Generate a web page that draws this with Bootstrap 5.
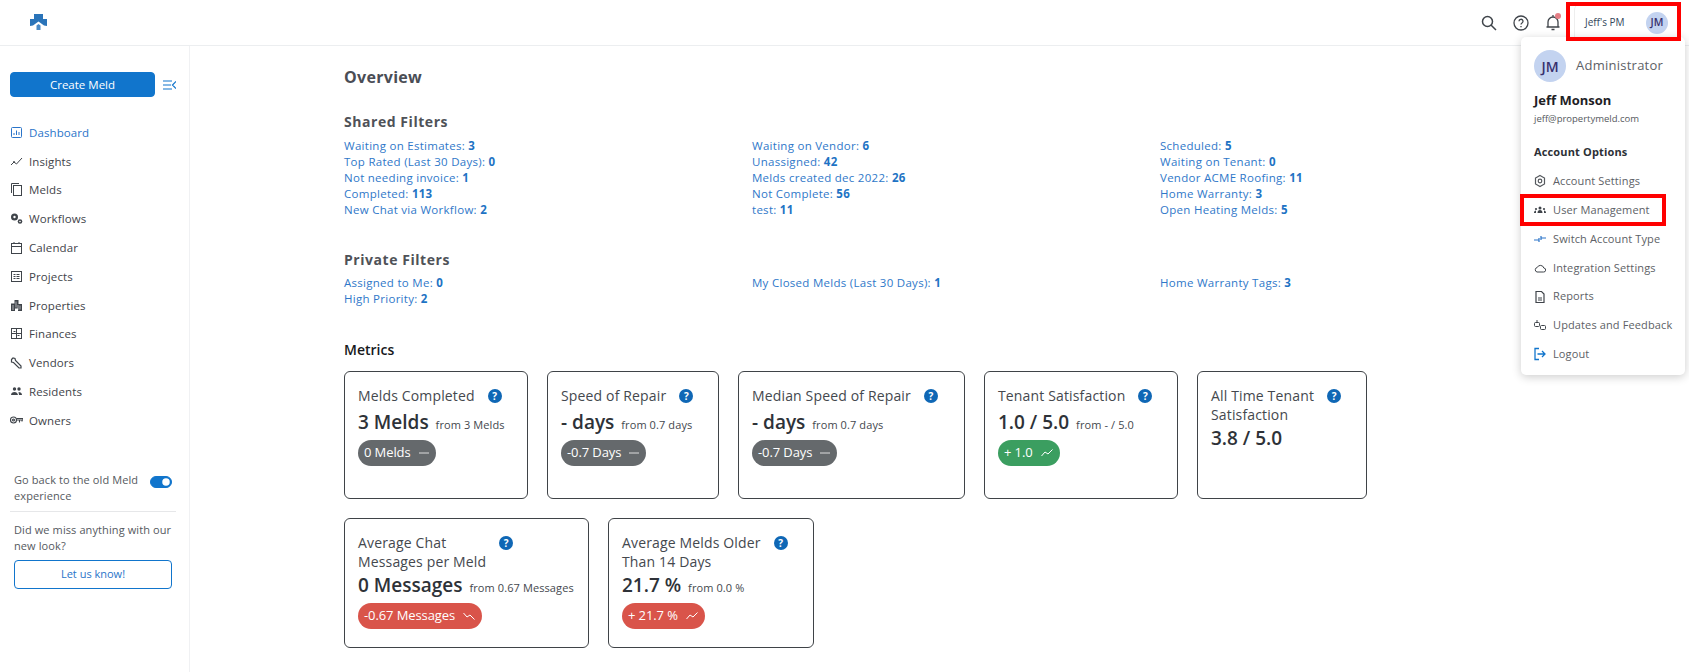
<!DOCTYPE html>
<html lang="en">
<head>
<meta charset="utf-8">
<title>Overview</title>
<link href="https://cdn.jsdelivr.net/npm/bootstrap@5.3.0/dist/css/bootstrap.min.css" rel="stylesheet">
<style>
html,body{height:672px;overflow:hidden;background:#fff}
body{font-family:"Open Sans","Liberation Sans",sans-serif;color:#3f444a;font-size:12px}
svg{display:block;flex:none}
.topbar{height:46px;border-bottom:1px solid #eceef0;padding-left:30px}
.top-icons{gap:16px;margin-right:13px}
.acct-chip{width:106px;height:38px;margin-right:9px;padding:0 12px 0 10px;border-left:1px solid #eee;border-radius:6px;font-size:10px;color:#33475b}
.avatar-round{width:22px;height:22px;border-radius:50%;background:#c3d3f0;color:#37306e;font-weight:600;font-size:10.5px}
.bell-wrap{position:relative}
.bell-dot{position:absolute;top:-1px;right:0;width:6px;height:6px;border-radius:50%;background:#e57f86}
.shell{height:626px}
.side-rail{width:190px;border-right:1px solid #f0f1f3;padding:26px 13px 0 10px;flex:none}
.create-btn{width:145px;height:25px;padding:0;font-size:11.500px;font-weight:500;background:#1175cc;border-color:#1175cc;border-radius:4px}
.rail-nav{margin-top:21px}
.rail-nav .nav-link{height:28.8px;padding:0;gap:6px;color:#3f444a;font-size:11.500px;letter-spacing:.1px;display:flex;align-items:center}
.rail-nav svg{width:13px}
.rail-nav .nav-link.active{color:#2a74c9}
.rail-foot{margin-top:37px;padding-left:4px;line-height:16px;font-size:11px;color:#55595e;letter-spacing:.1px}
.rail-foot .form-check-input{width:22px;height:12px;margin:0 4px 0 0;background-color:#1175cc;border-color:#1175cc;float:none}
.rail-rule{margin:7px 0 10px -4px;width:166px;border:0;border-top:1px solid #e6e7e9;opacity:1}
.letus-btn{width:158px;height:29px;padding:0;margin-top:6px;font-size:11px;color:#2a74c9;border:1px solid #1175cc;border-radius:4px;display:block}
.main-area{padding:21px 0 0 154px;flex:1;min-width:0}
.page-head{font-size:16px;font-weight:700;color:#4a4d55;line-height:20px;margin:0 0 25px;letter-spacing:.3px}
.sect-head{font-size:14px;font-weight:700;color:#4f5258;line-height:20px;margin:0 0 5px;letter-spacing:.55px}
.sect-head.first{margin-bottom:6px}
.filter-grid{width:1224px;margin:0 0 32px;--bs-gutter-x:0}
.filter-grid.last{margin-bottom:37px}
.filter-link{display:block;line-height:16px;height:16px;font-size:11.500px;color:#2f78c9;text-decoration:none;letter-spacing:.28px}
.filter-link b{font-weight:700;color:#1e73c4}
.metric-head{font-size:14px;font-weight:600;color:#17191c;line-height:20px;margin:-4px 0 11px}
.metric-rows{gap:19px;width:1100px}
.metric-box{border:1px solid #3f4347;border-radius:6px;padding:14px 13px 0;height:128px}
.metric-box.tall{height:130px}
.w-a{width:184px}.w-b{width:172px}.w-c{width:227px}.w-d{width:194px}.w-e{width:170px}.w-f{width:245px}.w-g{width:206px}
.metric-title{font-size:14px;line-height:19px;gap:13px;color:#44484e;margin-bottom:0;letter-spacing:.15px}
.q-dot{width:14px;height:14px;border-radius:50%;background:#0f67b5;color:#fff;font-size:10px;font-weight:700;line-height:14px;text-align:center;margin-top:3px;flex:none;letter-spacing:0}
.metric-val{font-size:19px;font-weight:600;color:#2e3238;line-height:26px;margin-top:4px;white-space:nowrap}
.two-line .metric-val{margin-top:1px}
.metric-val small{font-size:11px;font-weight:400;color:#44484e;margin-left:2px;letter-spacing:.1px}
.trend-pill{height:26px;border-radius:13px;padding:0 7px 0 6px;font-size:13px;font-weight:500;color:#fff;gap:8px;margin-top:2px;width:fit-content;letter-spacing:-.1px}
.pill-gray{background:#65696c}.pill-green{background:#3b9e60}.pill-red{background:#d9544a}
.acct-menu{position:absolute;left:1521px;top:37px;width:164px;height:338px;background:#fff;border-radius:5px;box-shadow:0 2px 10px rgba(0,0,0,.2);padding:13px 0 0 13px;z-index:5}
.menu-avatar{width:32px;height:32px;border-radius:50%;background:#c3d3f0;color:#37306e;font-weight:600;font-size:14px}
.menu-role{font-size:13px;font-weight:500;color:#5d6166;letter-spacing:.25px;margin-left:10px}
.menu-name{font-size:13px;font-weight:700;color:#1e2125;line-height:18px;margin-top:9px}
.menu-mail{font-size:9.500px;color:#55595e;line-height:14px;margin-top:3px}
.menu-opts{font-size:11px;font-weight:700;color:#2c3036;line-height:16px;margin-top:18px;letter-spacing:.15px}
.menu-list{margin-top:7px}
.menu-list .list-group-item{border:0;padding:0;height:28.8px;gap:7px;font-size:11px;color:#5d6166;letter-spacing:.12px;background:transparent;display:flex;align-items:center;white-space:nowrap}
.menu-ico{width:12px;height:14px}
.red-frame{position:absolute;border:4px solid #f00;z-index:6;pointer-events:none}
.frame-top{left:1566px;top:2px;width:115px;height:39px}
.frame-user{left:1520px;top:194px;width:146px;height:32px}
</style>
</head>
<body>
<header class="topbar d-flex align-items-center justify-content-between">
  <svg width="17" height="17" viewBox="0 0 17 17"><path d="M4 0h9v5h4v7l-3-.5-5.500-4-5.500 4L0 12V5h4z" fill="#2a74b9"/><path d="M6.500 11.500l2-1.500 2 1.500V16h-4z" fill="#4a8ac6"/></svg>
  <div class="d-flex align-items-center">
    <div class="top-icons d-flex align-items-center">
      <svg width="16" height="16" viewBox="0 0 16 16" fill="none" stroke="#3f444a" stroke-width="1.500"><circle cx="6.500" cy="6.500" r="5"/><path d="M10 10l5 5"/></svg>
      <svg width="16" height="16" viewBox="0 0 16 16" fill="none" stroke="#3f444a" stroke-width="1.300"><circle cx="8" cy="8" r="7"/><path d="M6 6.300a2 2 0 1 1 3 1.700c-.7.400-1 .8-1 1.600M8 11v1.300"/></svg>
      <span class="bell-wrap"><svg width="16" height="17" viewBox="0 0 16 17" fill="none" stroke="#3f444a" stroke-width="1.300"><path d="M3 13V8a5 5 0 0 1 10 0v5M1.500 13h13M6.500 15.500h3M8 1v2"/></svg><i class="bell-dot"></i></span>
    </div>
    <div class="acct-chip d-flex align-items-center justify-content-between"><span>Jeff's PM</span><span class="avatar-round d-flex align-items-center justify-content-center">JM</span></div>
  </div>
</header>
<div class="shell d-flex">
  <aside class="side-rail">
    <div class="d-flex align-items-center">
      <button class="btn btn-primary create-btn" type="button">Create Meld</button>
      <svg class="ms-2" width="13" height="10" viewBox="0 0 13 10" fill="none" stroke="#1175cc" stroke-width="1.200"><path d="M0 1h9M0 5h8M0 9h9M13 1.500L9.500 5l3.500 3.500"/></svg>
    </div>
    <nav class="nav flex-column rail-nav">
      <a class="nav-link active" href="#"><svg width="11" height="11" viewBox="0 0 11 11" fill="none" stroke="#2a74c9"><rect x=".5" y=".5" width="10" height="10" rx="1"/><path d="M3 8V6M5.500 8V3.500M8 8V5"/></svg>Dashboard</a>
      <a class="nav-link" href="#"><svg width="12" height="11" viewBox="0 0 12 11" fill="none" stroke="#3f444a"><path d="M.5 9l3-3 2.500 2 5.500-6"/><circle cx="3.500" cy="6" r=".6"/></svg>Insights</a>
      <a class="nav-link" href="#"><svg width="11" height="13" viewBox="0 0 11 13" fill="none" stroke="#3f444a"><path d="M.5 10V.5H8"/><rect x="2.500" y="2.500" width="8" height="10"/></svg>Melds</a>
      <a class="nav-link" href="#"><svg width="12" height="11" viewBox="0 0 12 11" fill="#3f444a"><circle cx="4" cy="4" r="3.500"/><circle cx="9.500" cy="8.500" r="2.300"/><circle cx="4" cy="4" r="1.200" fill="#fff"/><circle cx="9.500" cy="8.500" r=".8" fill="#fff"/></svg>Workflows</a>
      <a class="nav-link" href="#"><svg width="11" height="12" viewBox="0 0 11 12" fill="none" stroke="#3f444a"><rect x=".5" y="1.500" width="10" height="10"/><path d="M.5 4.500h10M3 0v2M8 0v2"/></svg>Calendar</a>
      <a class="nav-link" href="#"><svg width="11" height="11" viewBox="0 0 11 11" fill="none" stroke="#3f444a"><rect x=".5" y=".5" width="10" height="10"/><path d="M2.500 3.500h2M2.500 5.500h2M2.500 7.500h2M5.500 3.500h3M5.500 5.500h3M5.500 7.500h3"/></svg>Projects</a>
      <a class="nav-link" href="#"><svg width="11" height="11" viewBox="0 0 11 11" fill="#3f444a"><path d="M3.500 0h4v4H11v7H7V8.500H4V11H0V3.500h3.500z"/><path d="M5 1.500v6M7 5v5M2 5v5M9 5.500v4" stroke="#fff" stroke-width=".6"/></svg>Properties</a>
      <a class="nav-link" href="#"><svg width="11" height="11" viewBox="0 0 11 11" fill="none" stroke="#3f444a"><rect x=".5" y=".5" width="10" height="10"/><path d="M5.500 1v9M1 5.500h9M2.500 3.500h2M6.500 7.500h2"/></svg>Finances</a>
      <a class="nav-link" href="#"><svg width="12" height="12" viewBox="0 0 12 12" fill="none" stroke="#3f444a" stroke-width="1.200"><path d="M1 2.500L2.500 1l2 .5.5 2 5.500 5.500v2h-2L3 5.500l-2-.5z"/></svg>Vendors</a>
      <a class="nav-link" href="#"><svg width="11" height="9" viewBox="0 0 11 9" fill="#3f444a"><circle cx="3.500" cy="2" r="1.700"/><circle cx="8" cy="2" r="1.700"/><path d="M0 8c0-2 1.500-3 3.500-3S6.500 6 7 8zM7.500 5c2 0 3.500 1 3.500 3H8z"/></svg>Residents</a>
      <a class="nav-link" href="#"><svg width="13" height="8" viewBox="0 0 13 8" fill="none" stroke="#3f444a" stroke-width="1.100"><circle cx="3.500" cy="4" r="3"/><circle cx="3.500" cy="4" r="1"/><path d="M6.500 2.500H13v1.500H6.500M9.500 4v2.500M12 4v1.500"/></svg>Owners</a>
    </nav>
    <div class="rail-foot">
      <div class="d-flex align-items-center justify-content-between"><span>Go back to the old Meld<br>experience</span><div class="form-check form-switch p-0 m-0 d-flex"><input class="form-check-input" type="checkbox" role="switch" checked aria-label="Old Meld experience"></div></div>
      <hr class="rail-rule">
      <div>Did we miss anything with our<br>new look?</div>
      <button class="btn letus-btn" type="button">Let us know!</button>
    </div>
  </aside>
  <main class="main-area">
    <h1 class="page-head">Overview</h1>
    <h2 class="sect-head first">Shared Filters</h2>
    <div class="row filter-grid">
      <div class="col-4">
        <a class="filter-link" href="#">Waiting on Estimates: <b>3</b></a>
        <a class="filter-link" href="#">Top Rated (Last 30 Days): <b>0</b></a>
        <a class="filter-link" href="#">Not needing invoice: <b>1</b></a>
        <a class="filter-link" href="#">Completed: <b>113</b></a>
        <a class="filter-link" href="#">New Chat via Workflow: <b>2</b></a>
      </div>
      <div class="col-4">
        <a class="filter-link" href="#">Waiting on Vendor: <b>6</b></a>
        <a class="filter-link" href="#">Unassigned: <b>42</b></a>
        <a class="filter-link" href="#">Melds created dec 2022: <b>26</b></a>
        <a class="filter-link" href="#">Not Complete: <b>56</b></a>
        <a class="filter-link" href="#">test: <b>11</b></a>
      </div>
      <div class="col-4">
        <a class="filter-link" href="#">Scheduled: <b>5</b></a>
        <a class="filter-link" href="#">Waiting on Tenant: <b>0</b></a>
        <a class="filter-link" href="#">Vendor ACME Roofing: <b>11</b></a>
        <a class="filter-link" href="#">Home Warranty: <b>3</b></a>
        <a class="filter-link" href="#">Open Heating Melds: <b>5</b></a>
      </div>
    </div>
    <h2 class="sect-head">Private Filters</h2>
    <div class="row filter-grid last">
      <div class="col-4">
        <a class="filter-link" href="#">Assigned to Me: <b>0</b></a>
        <a class="filter-link" href="#">High Priority: <b>2</b></a>
      </div>
      <div class="col-4"><a class="filter-link" href="#">My Closed Melds (Last 30 Days): <b>1</b></a></div>
      <div class="col-4"><a class="filter-link" href="#">Home Warranty Tags: <b>3</b></a></div>
    </div>
    <h2 class="metric-head">Metrics</h2>
    <div class="metric-rows d-flex flex-wrap">
      <section class="metric-box w-a">
        <div class="metric-title d-flex"><span>Melds Completed</span><span class="q-dot">?</span></div>
        <div class="metric-val">3 Melds <small>from 3 Melds</small></div>
        <div class="trend-pill pill-gray d-flex align-items-center">0 Melds<svg width="10" height="2" viewBox="0 0 10 2"><path d="M0 1h10" stroke="#ddd"/></svg></div>
      </section>
      <section class="metric-box w-b">
        <div class="metric-title d-flex"><span>Speed of Repair</span><span class="q-dot">?</span></div>
        <div class="metric-val">- days <small>from 0.7 days</small></div>
        <div class="trend-pill pill-gray d-flex align-items-center">-0.7 Days<svg width="10" height="2" viewBox="0 0 10 2"><path d="M0 1h10" stroke="#ddd"/></svg></div>
      </section>
      <section class="metric-box w-c">
        <div class="metric-title d-flex"><span>Median Speed of Repair</span><span class="q-dot">?</span></div>
        <div class="metric-val">- days <small>from 0.7 days</small></div>
        <div class="trend-pill pill-gray d-flex align-items-center">-0.7 Days<svg width="10" height="2" viewBox="0 0 10 2"><path d="M0 1h10" stroke="#ddd"/></svg></div>
      </section>
      <section class="metric-box w-d">
        <div class="metric-title d-flex"><span>Tenant Satisfaction</span><span class="q-dot">?</span></div>
        <div class="metric-val">1.0 / 5.0 <small>from - / 5.0</small></div>
        <div class="trend-pill pill-green d-flex align-items-center">+ 1.0<svg width="12" height="8" viewBox="0 0 12 8" fill="none" stroke="#fff"><path d="M.5 7l3.500-4 3 2 4.500-4.500"/></svg></div>
      </section>
      <section class="metric-box two-line w-e">
        <div class="metric-title d-flex"><span>All Time Tenant<br>Satisfaction</span><span class="q-dot">?</span></div>
        <div class="metric-val">3.8 / 5.0</div>
      </section>
      <section class="metric-box tall two-line w-f">
        <div class="metric-title d-flex"><span>Average Chat<br>Messages per Meld</span><span class="q-dot">?</span></div>
        <div class="metric-val">0 Messages <small>from 0.67 Messages</small></div>
        <div class="trend-pill pill-red d-flex align-items-center">-0.67 Messages<svg width="12" height="8" viewBox="0 0 12 8" fill="none" stroke="#fff"><path d="M.5 1l3.500 4 3-2 4.500 4.500"/></svg></div>
      </section>
      <section class="metric-box tall two-line w-g">
        <div class="metric-title d-flex"><span>Average Melds Older<br>Than 14 Days</span><span class="q-dot">?</span></div>
        <div class="metric-val">21.7 % <small>from 0.0 %</small></div>
        <div class="trend-pill pill-red d-flex align-items-center">+ 21.7 %<svg width="12" height="8" viewBox="0 0 12 8" fill="none" stroke="#fff"><path d="M.5 7l3.500-4 3 2 4.500-4.500"/></svg></div>
      </section>
    </div>
  </main>
</div>
<div class="acct-menu">
  <div class="d-flex align-items-center"><span class="menu-avatar d-flex align-items-center justify-content-center">JM</span><span class="menu-role">Administrator</span></div>
  <div class="menu-name">Jeff Monson</div>
  <div class="menu-mail">jeff@propertymeld.com</div>
  <div class="menu-opts">Account Options</div>
  <div class="list-group list-group-flush menu-list">
    <a class="list-group-item" href="#"><svg class="menu-ico" viewBox="0 0 12 14" fill="none" stroke="#55595e" stroke-width="1.200"><path d="M6 1.500l4.500 2.600v5.800L6 12.500 1.500 9.900V4.100z"/><circle cx="6" cy="7" r="1.800"/></svg>Account Settings</a>
    <a class="list-group-item" href="#"><svg class="menu-ico" viewBox="0 0 12 14" fill="#3f444a"><circle cx="6" cy="5" r="1.500"/><circle cx="2" cy="6" r="1.100"/><circle cx="10" cy="6" r="1.100"/><path d="M3.500 10c0-2 1-3 2.500-3s2.500 1 2.500 3zM0 10c0-1.500.7-2.500 2-2.500V10zM12 10c0-1.500-.7-2.500-2-2.500V10z"/></svg>User Management</a>
    <a class="list-group-item" href="#"><svg class="menu-ico" viewBox="0 0 12 14" fill="none" stroke="#2a74c9" stroke-width="1.200"><path d="M0 8h5M7 6h5M7 4v4M5 6v4"/></svg>Switch Account Type</a>
    <a class="list-group-item" href="#"><svg class="menu-ico" viewBox="0 0 12 14" fill="none" stroke="#3f444a"><path d="M3 11h6.500a2 2 0 0 0 .3-4A3.500 3.500 0 0 0 3.200 6.500 2.300 2.300 0 0 0 3 11z"/></svg>Integration Settings</a>
    <a class="list-group-item" href="#"><svg class="menu-ico" viewBox="0 0 12 14" fill="none" stroke="#3f444a" stroke-width="1.200"><path d="M2 1.500h5.500l2.500 2.500v8.500H2z"/><path d="M4 8h4M4 10h4"/></svg>Reports</a>
    <a class="list-group-item" href="#"><svg class="menu-ico" viewBox="0 0 12 14" fill="none" stroke="#3f444a"><rect x=".5" y="4.500" width="5" height="4" rx="1"/><path d="M3 2v2.500"/><rect x="6.500" y="7.500" width="5" height="4" rx="1"/></svg>Updates and Feedback</a>
    <a class="list-group-item" href="#"><svg class="menu-ico" viewBox="0 0 12 14" fill="none" stroke="#1175cc" stroke-width="1.300"><path d="M5 1.500H1v11h4M3.500 7H11M8 4l3 3-3 3"/></svg>Logout</a>
  </div>
</div>
<div class="red-frame frame-top"></div>
<div class="red-frame frame-user"></div>
<script src="https://cdn.jsdelivr.net/npm/bootstrap@5.3.0/dist/js/bootstrap.bundle.min.js"></script>
</body>
</html>
